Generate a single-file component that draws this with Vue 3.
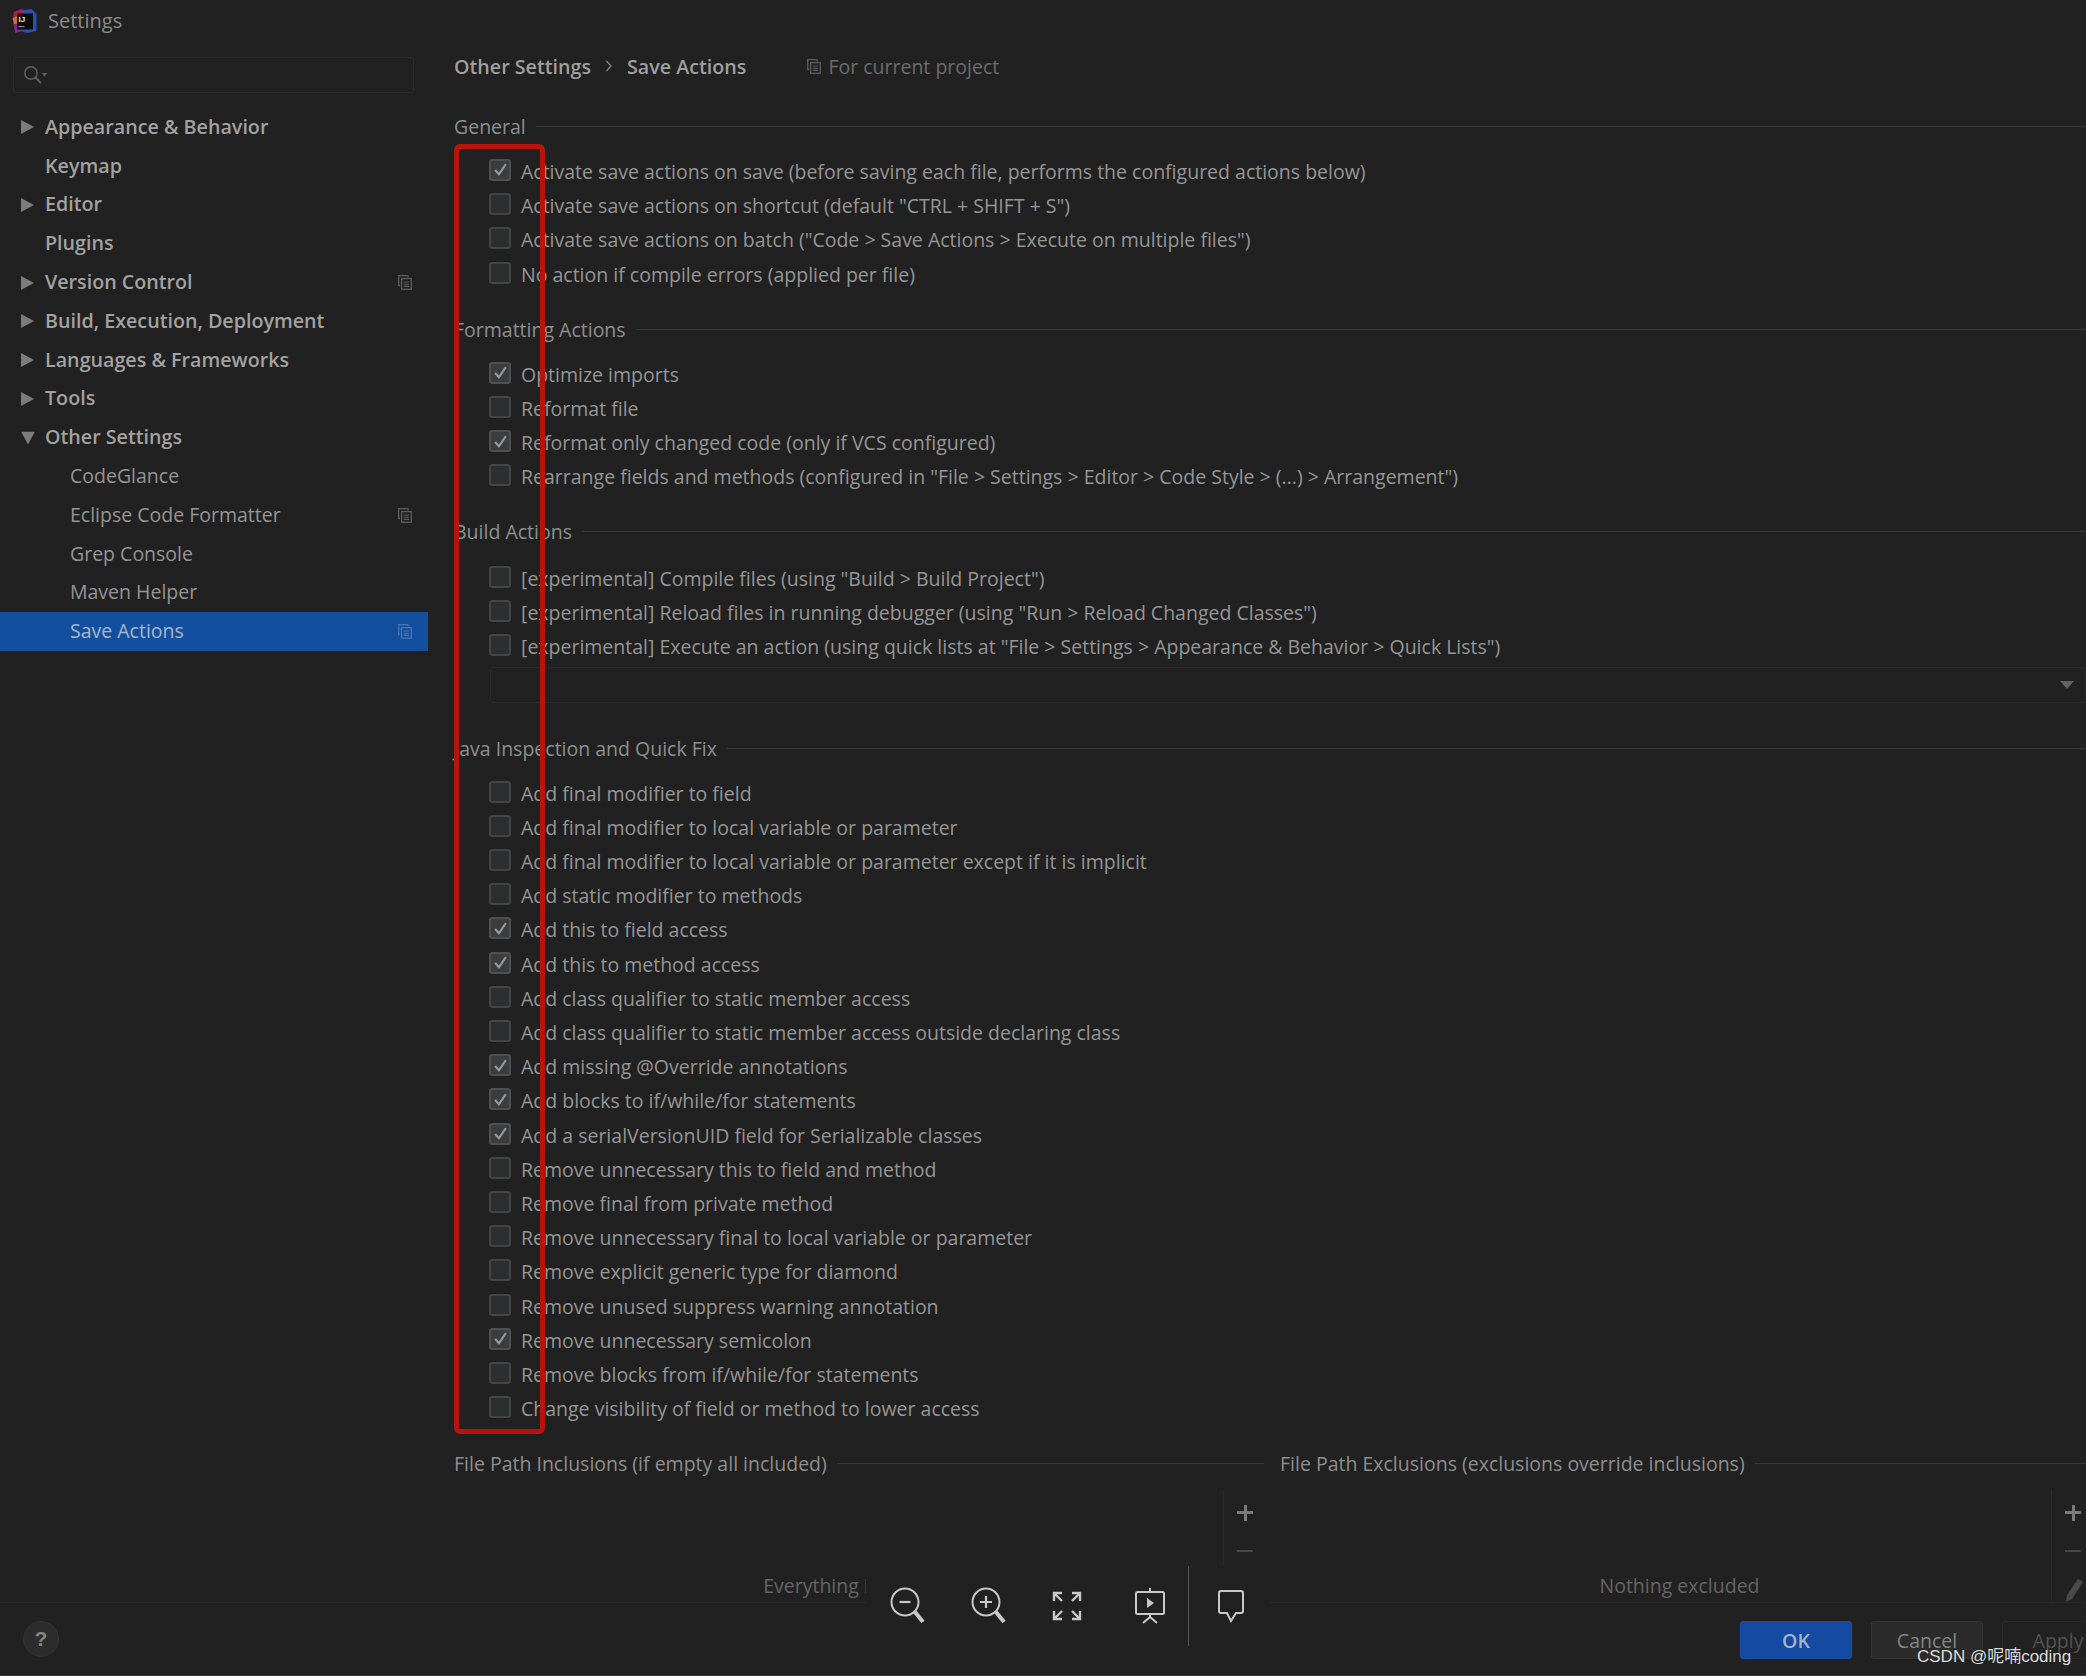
<script setup>
const nav = [
  { label: 'Appearance & Behavior', arrow: 'right' },
  { label: 'Keymap' },
  { label: 'Editor', arrow: 'right' },
  { label: 'Plugins' },
  { label: 'Version Control', arrow: 'right', copy: true },
  { label: 'Build, Execution, Deployment', arrow: 'right' },
  { label: 'Languages & Frameworks', arrow: 'right' },
  { label: 'Tools', arrow: 'right' },
  { label: 'Other Settings', arrow: 'down' },
  { label: 'CodeGlance', child: true },
  { label: 'Eclipse Code Formatter', child: true, copy: true },
  { label: 'Grep Console', child: true },
  { label: 'Maven Helper', child: true },
  { label: 'Save Actions', child: true, copy: true, selected: true }
]

const sections = [
  {
    title: 'General',
    rows: [
      ['Activate save actions on save (before saving each file, performs the configured actions below)', true],
      ['Activate save actions on shortcut (default "CTRL + SHIFT + S")', false],
      ['Activate save actions on batch ("Code > Save Actions > Execute on multiple files")', false],
      ['No action if compile errors (applied per file)', false]
    ]
  },
  {
    title: 'Formatting Actions',
    rows: [
      ['Optimize imports', true],
      ['Reformat file', false],
      ['Reformat only changed code (only if VCS configured)', true],
      ['Rearrange fields and methods (configured in "File > Settings > Editor > Code Style > (...) > Arrangement")', false]
    ]
  },
  {
    title: 'Build Actions',
    combo: true,
    rows: [
      ['[experimental] Compile files (using "Build > Build Project")', false],
      ['[experimental] Reload files in running debugger (using "Run > Reload Changed Classes")', false],
      ['[experimental] Execute an action (using quick lists at "File > Settings > Appearance & Behavior > Quick Lists")', false]
    ]
  },
  {
    title: 'Java Inspection and Quick Fix',
    rows: [
      ['Add final modifier to field', false],
      ['Add final modifier to local variable or parameter', false],
      ['Add final modifier to local variable or parameter except if it is implicit', false],
      ['Add static modifier to methods', false],
      ['Add this to field access', true],
      ['Add this to method access', true],
      ['Add class qualifier to static member access', false],
      ['Add class qualifier to static member access outside declaring class', false],
      ['Add missing @Override annotations', true],
      ['Add blocks to if/while/for statements', true],
      ['Add a serialVersionUID field for Serializable classes', true],
      ['Remove unnecessary this to field and method', false],
      ['Remove final from private method', false],
      ['Remove unnecessary final to local variable or parameter', false],
      ['Remove explicit generic type for diamond', false],
      ['Remove unused suppress warning annotation', false],
      ['Remove unnecessary semicolon', true],
      ['Remove blocks from if/while/for statements', false],
      ['Change visibility of field or method to lower access', false]
    ]
  }
]
</script>

<template>
  <div class="window">
    <header class="titlebar">
      <svg class="logo" viewBox="0 0 24 24" width="25" height="24">
        <polygon points="1,3 9,0 15,2 12,12 3,24 1,16" fill="#b3195c" />
        <polygon points="0,9 5,7 6,15 2,17" fill="#d9701c" />
        <polygon points="11,1 19,0 24,5 24,22 15,24 8,22" fill="#2b4fb8" />
        <polygon points="1,15 8,14 9,22 3,24" fill="#7a2a90" />
        <rect x="4.5" y="4.5" width="16" height="16" fill="#0b0b0b" />
        <text x="6" y="12.5" class="logo-text">IJ</text>
        <rect x="6" y="17" width="6" height="1.2" fill="#8a8a8a" />
      </svg>
      <span class="title">Settings</span>
    </header>

    <div class="body">
      <aside class="sidebar">
        <div class="search">
          <svg viewBox="0 0 26 20" width="26" height="20">
            <circle cx="8" cy="8" r="6.2" fill="none" stroke="#5f5f5f" stroke-width="1.5" />
            <path d="M12.5 12.5L18 18" stroke="#5f5f5f" stroke-width="2" />
            <path d="M18.5 8h6l-3 3.5z" fill="#5f5f5f" />
          </svg>
        </div>
        <ul class="tree">
          <li
            v-for="item in nav"
            :key="item.label"
            class="tree-row"
            :class="{ child: item.child, selected: item.selected }"
          >
            <svg v-if="item.arrow === 'right'" class="arrow" viewBox="0 0 13 14" width="13" height="14">
              <path d="M0 0L13 7L0 14z" fill="#7c7c7c" />
            </svg>
            <svg v-else-if="item.arrow === 'down'" class="arrow" viewBox="0 0 14 13" width="14" height="13">
              <path d="M0 0H14L7 13z" fill="#7c7c7c" />
            </svg>
            <span class="tree-label">{{ item.label }}</span>
            <svg v-if="item.copy" class="copy" viewBox="0 0 14 15" width="14" height="15">
              <path d="M2 10.5H.7V.7H10V2.5" fill="none" stroke="currentColor" stroke-width="1.3" />
              <rect x="3.6" y="3.6" width="9.7" height="10.7" fill="none" stroke="currentColor" stroke-width="1.3" />
              <path d="M5.8 7h5.2M5.8 9.2h5.2M5.8 11.4h5.2" stroke="currentColor" stroke-width="1.1" />
            </svg>
          </li>
        </ul>
      </aside>

      <main class="main">
        <div class="crumbs">
          <span class="crumb">Other Settings</span>
          <svg class="chevron" viewBox="0 0 8 12" width="8" height="12">
            <path d="M1.5 1L6 6L1.5 11" fill="none" stroke="#858585" stroke-width="1.3" />
          </svg>
          <span class="crumb">Save Actions</span>
          <svg class="copy crumb-copy" viewBox="0 0 14 15" width="14" height="15">
            <path d="M2 10.5H.7V.7H10V2.5" fill="none" stroke="currentColor" stroke-width="1.3" />
            <rect x="3.6" y="3.6" width="9.7" height="10.7" fill="none" stroke="currentColor" stroke-width="1.3" />
            <path d="M5.8 7h5.2M5.8 9.2h5.2M5.8 11.4h5.2" stroke="currentColor" stroke-width="1.1" />
          </svg>
          <span class="scope">For current project</span>
        </div>

        <section v-for="section in sections" :key="section.title" class="section" :class="{ 'has-combo': section.combo }">
          <h3 class="heading"><span>{{ section.title }}</span></h3>
          <div v-for="row in section.rows" :key="row[0]" class="check-row">
            <span class="box" :class="{ on: row[1] }">
              <svg v-if="row[1]" viewBox="0 0 14 14" width="15" height="15">
                <path d="M2 7.5L5.5 11.5L12 2" fill="none" stroke="#989898" stroke-width="2" />
              </svg>
            </span>
            <span class="check-label">{{ row[0] }}</span>
          </div>
          <div v-if="section.combo" class="combo">
            <svg viewBox="0 0 14 8" width="14" height="8"><path d="M0 0H14L7 8z" fill="#626262" /></svg>
          </div>
        </section>

        <div class="paths">
          <div class="path-col left">
            <h3 class="heading"><span>File Path Inclusions (if empty all included)</span></h3>
            <div class="path-box">
              <div class="list"><span class="empty">Everything included</span></div>
              <div class="tools">
                <span class="tool plus"></span>
                <span class="tool minus"></span>
              </div>
            </div>
          </div>
          <div class="path-col right">
            <h3 class="heading"><span>File Path Exclusions (exclusions override inclusions)</span></h3>
            <div class="path-box">
              <div class="list"><span class="empty">Nothing excluded</span></div>
              <div class="tools">
                <span class="tool plus"></span>
                <span class="tool minus"></span>
                <svg class="pencil" viewBox="0 0 20 24" width="20" height="24">
                  <path d="M13 1L18 4L7 21L1 24L2 17z" fill="#4a4a4a" />
                </svg>
              </div>
            </div>
          </div>
        </div>
      </main>
    </div>

    <footer class="footer">
      <span class="help">?</span>
      <div class="buttons">
        <button class="btn primary">OK</button>
        <button class="btn">Cancel</button>
        <button class="btn disabled">Apply</button>
      </div>
    </footer>

    <div class="red-box"></div>

    <div class="viewer">
      <svg class="vicon" viewBox="0 0 36 40" width="36" height="40">
        <circle cx="15" cy="16" r="13.5" fill="none" stroke="#c9c9c9" stroke-width="2" />
        <path d="M9.5 16h11" stroke="#c9c9c9" stroke-width="2.2" />
        <path d="M25 26L33 36" stroke="#c9c9c9" stroke-width="4" />
      </svg>
      <svg class="vicon" viewBox="0 0 36 40" width="36" height="40">
        <circle cx="15" cy="16" r="13.5" fill="none" stroke="#c9c9c9" stroke-width="2" />
        <path d="M9 16h12M15 10v12" stroke="#c9c9c9" stroke-width="2.2" />
        <path d="M25 26L33 36" stroke="#c9c9c9" stroke-width="4" />
      </svg>
      <svg class="vicon fit" viewBox="0 0 30 30" width="30" height="30">
        <path d="M2 10V2H10M2 2L10 10M20 2H28V10M28 2L20 10M2 20V28H10M2 28L10 20M28 20V28H20M28 28L20 20" fill="none" stroke="#c9c9c9" stroke-width="2.4" />
      </svg>
      <svg class="vicon screen" viewBox="0 0 32 36" width="32" height="36">
        <rect x="2" y="4" width="28" height="22" rx="1.5" fill="none" stroke="#c9c9c9" stroke-width="2" />
        <path d="M16 0v4M16 26v4M16 29L9 35M16 29L23 35" fill="none" stroke="#c9c9c9" stroke-width="2" />
        <path d="M13 10L20 15L13 20z" fill="#c9c9c9" />
      </svg>
      <span class="vsep"></span>
      <svg class="vicon" viewBox="0 0 28 34" width="28" height="34">
        <path d="M4 2H24Q26 2 26 4V22Q26 24 24 24H19L14 32L10 24H4Q2 24 2 22V4Q2 2 4 2z" fill="none" stroke="#c9c9c9" stroke-width="2" />
      </svg>
    </div>

    <div class="watermark">CSDN @呢喃coding</div>
  </div>
</template>

<style>
html, body { margin: 0; background: #212121; }
</style>

<style scoped>
.window {
  position: relative;
  width: 2086px;
  height: 1676px;
  overflow: hidden;
  display: flex;
  flex-direction: column;
  box-sizing: border-box;
  background: #212121;
  color: #9a9a9a;
  font-family: "Open Sans", "Noto Sans", sans-serif;
  font-size: 19.5px;
  border-bottom: 1px solid #3a3a3a;
}
.titlebar {
  height: 42px;
  flex: none;
  display: flex;
  align-items: center;
  padding-left: 12px;
  gap: 11px;
  box-sizing: border-box;
}
.logo-text { font: 700 8px "Liberation Sans", sans-serif; fill: #e8e8e8; }
.title { color: #8c8c8c; font-size: 20px; margin-bottom: 2px; }
.body { flex: none; height: 1560px; display: flex; }
.sidebar { width: 428px; flex: none; }
.search {
  margin: 15px 14px 15px 13px;
  height: 36px;
  border: 1px solid #2a2a2a;
  border-radius: 2px;
  box-sizing: border-box;
  display: flex;
  align-items: center;
  padding-left: 9px;
}
.tree { list-style: none; margin: 0; padding: 0; }
.tree-row {
  position: relative;
  height: 38.8px;
  box-sizing: border-box;
  display: flex;
  align-items: center;
  padding-left: 45px;
  padding-bottom: 2px;
  font-weight: 600;
  font-size: 19.7px;
  color: #a2a2a2;
}
.tree-row.child { padding-left: 70px; font-weight: 400; font-size: 19.5px; color: #959595; }
.tree-row.selected { background: #12509f; color: #a9b7cb; }
.arrow { position: absolute; left: 21px; top: 50%; transform: translateY(-50%); }
.copy { color: #5d5d5d; }
.tree-row .copy { position: absolute; left: 398px; top: 12px; }
.tree-row.selected .copy { color: #4b75ad; }
.main { flex: 1; min-width: 0; padding-left: 26px; }
.crumbs { height: 50px; box-sizing: border-box; padding-bottom: 2px; display: flex; align-items: center; margin-bottom: 20.4px; }
.crumb { font-weight: 600; font-size: 19.7px; color: #9f9f9f; }
.chevron { margin: 0 14px; }
.crumb-copy { margin: 0 7px 0 61px; }
.scope { color: #6c6c6c; }
.section { margin-bottom: 24px; }
.section.has-combo { margin-bottom: 30.7px; }
.heading {
  margin: 0 0 12px;
  height: 30px;
  box-sizing: border-box;
  padding-bottom: 2px;
  display: flex;
  align-items: center;
  gap: 10px;
  font: inherit;
  font-weight: 400;
  color: #8f8f8f;
}
.has-combo .heading { margin-bottom: 13.5px; }
.heading::after { content: ""; flex: 1; height: 1px; background: #383838; }
.check-row {
  height: 34.2px;
  display: flex;
  align-items: center;
  padding-left: 35px;
  white-space: nowrap;
}
.box {
  width: 22px;
  height: 22px;
  flex: none;
  box-sizing: border-box;
  border: 2px solid #434545;
  border-radius: 3px;
  background: #2c2f30;
  display: flex;
  align-items: center;
  justify-content: center;
  margin-right: 10px;
  margin-top: -3px;
}
.box.on { background: #3a3c3d; border-color: #4e5050; }
.check-label { color: #969696; }
.combo {
  margin: 3.5px 0 0 36px;
  height: 36px;
  border: 1px solid #2a2a2a;
  border-radius: 3px;
  box-sizing: border-box;
  display: flex;
  align-items: center;
  justify-content: flex-end;
  padding-right: 11px;
}
.paths { display: flex; gap: 16px; }
.path-col.left { width: 810px; flex: none; }
.path-col.right { flex: 1; min-width: 0; }
.path-col .heading { margin-bottom: 0; }
.path-box { height: 121px; display: flex; }
.list {
  flex: 1;
  display: flex;
  align-items: flex-end;
  justify-content: center;
  padding: 0 0 2px 28px;
}
.empty { color: #656565; line-height: 26px; }
.tools {
  position: relative;
  width: 40px;
  flex: none;
  border-left: 1px solid #2a2a2a;
  margin-top: 10px;
}
.path-col.right .tools { width: 34px; }
.tool { position: absolute; }
.plus { left: 13px; top: 15px; width: 16px; height: 16px; color: #7a7a7a; background: linear-gradient(currentColor, currentColor) center / 16px 3px no-repeat, linear-gradient(currentColor, currentColor) center / 3px 16px no-repeat; }
.minus { left: 13px; top: 60px; width: 16px; height: 2px; background: #474747; }
.pencil { position: absolute; left: 13px; top: 88px; }
.footer {
  flex: 1;
  display: flex;
  align-items: flex-start;
  justify-content: space-between;
  padding: 18px 0 0 23px;
  border-top: 1px solid #292929;
  box-sizing: border-box;
  min-height: 0;
}
.help {
  width: 36px;
  height: 36px;
  border-radius: 50%;
  background: #2c2c2c;
  border: 1px solid #333;
  box-sizing: border-box;
  display: flex;
  align-items: center;
  justify-content: center;
  color: #858585;
  font: 700 21px "Liberation Sans", sans-serif;
}
.buttons { display: flex; gap: 19px; margin-right: -28px; }
.btn {
  width: 112px;
  height: 38px;
  border: 1px solid #333;
  border-radius: 3px;
  background: #2b2b2b;
  color: #858585;
  font: inherit;
  padding: 0;
}
.btn.primary { background: #144aa1; border-color: #1c50a6; color: #a5b5cc; font-weight: 600; }
.btn.disabled { background: #212121; border-color: #2c2c2c; color: #525252; }
.red-box {
  position: absolute;
  left: 454px;
  top: 144px;
  width: 91px;
  height: 1290px;
  box-sizing: border-box;
  border: 5px solid #b8140c;
  border-radius: 6px;
}
.viewer {
  position: absolute;
  left: 866px;
  top: 1566px;
  width: 404px;
  height: 80px;
  background: #212121;
  display: flex;
  align-items: center;
  padding-left: 24px;
  box-sizing: border-box;
}
.vicon { flex: none; margin-right: 45px; }
.vicon.fit { margin-right: 52px; }
.vicon.screen { margin-right: 27px; }
.vsep { width: 1px; height: 80px; background: #555; margin: 0 28px 0 -5px; flex: none; }
.watermark {
  position: absolute;
  left: 1917px;
  top: 1642px;
  color: #dcdcdc;
  font: 17px "Liberation Sans", "Noto Sans CJK SC", sans-serif;
  white-space: nowrap;
}
</style>
